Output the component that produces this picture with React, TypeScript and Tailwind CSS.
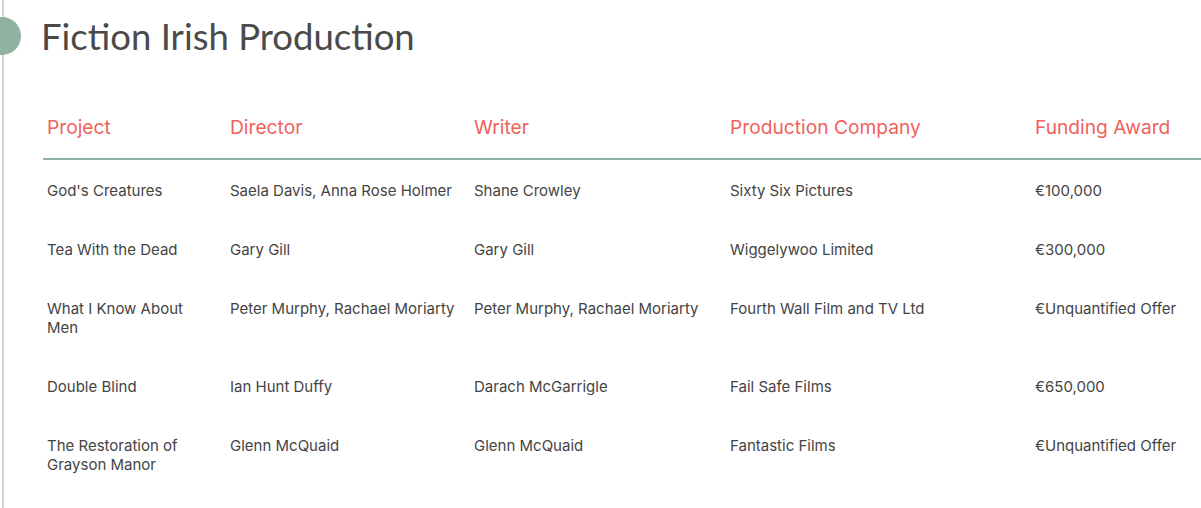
const rows = [
  ["God's Creatures", 'Saela Davis, Anna Rose Holmer', 'Shane Crowley', 'Sixty Six Pictures', '€100,000'],
  ['Tea With the Dead', 'Gary Gill', 'Gary Gill', 'Wiggelywoo Limited', '€300,000'],
  ['What I Know About Men', 'Peter Murphy, Rachael Moriarty', 'Peter Murphy, Rachael Moriarty', 'Fourth Wall Film and TV Ltd', '€Unquantified Offer'],
  ['Double Blind', 'Ian Hunt Duffy', 'Darach McGarrigle', 'Fail Safe Films', '€650,000'],
  ['The Restoration of Grayson Manor', 'Glenn McQuaid', 'Glenn McQuaid', 'Fantastic Films', '€Unquantified Offer'],
]

const headers = ['Project', 'Director', 'Writer', 'Production Company', 'Funding Award']

export default function App() {
  return (
    <div className="relative h-[508px] w-[1201px] overflow-hidden bg-white font-['Inter',sans-serif]">
      <div className="absolute left-[2px] top-0 h-full w-[2px] bg-[#cfd3d1]" />
      <div className="absolute left-[-17px] top-[17px] h-[38px] w-[38px] rounded-full bg-[#8fb3a0]" />
      <div className="pl-[41px]">
        <h1 className="h-[96px] pt-[14px] font-['Lato',sans-serif] text-[36.5px] leading-[44px] text-[#4a4a4a]">Fiction Irish Production</h1>
        <div className="w-[1200px] pl-[2px]">
          <div className="grid grid-cols-[183px_244px_256px_305px_200px] border-b-2 border-[#8fb3a0] pt-[20px] pb-[20px] text-[19.2px] leading-[22px] text-[#ef625c]">
            {headers.map((h) => (
              <div key={h} className="pl-[4px]">{h}</div>
            ))}
          </div>
          {rows.map((r) => (
            <div key={r[0]} className="grid grid-cols-[183px_244px_256px_305px_200px] pt-[21px] pb-[19px] text-[15px] leading-[19px] text-[#444444]">
              {r.map((c, i) => (
                <div key={i} className="pl-[4px] pr-[14px]">{c}</div>
              ))}
            </div>
          ))}
        </div>
      </div>
    </div>
  )
}
